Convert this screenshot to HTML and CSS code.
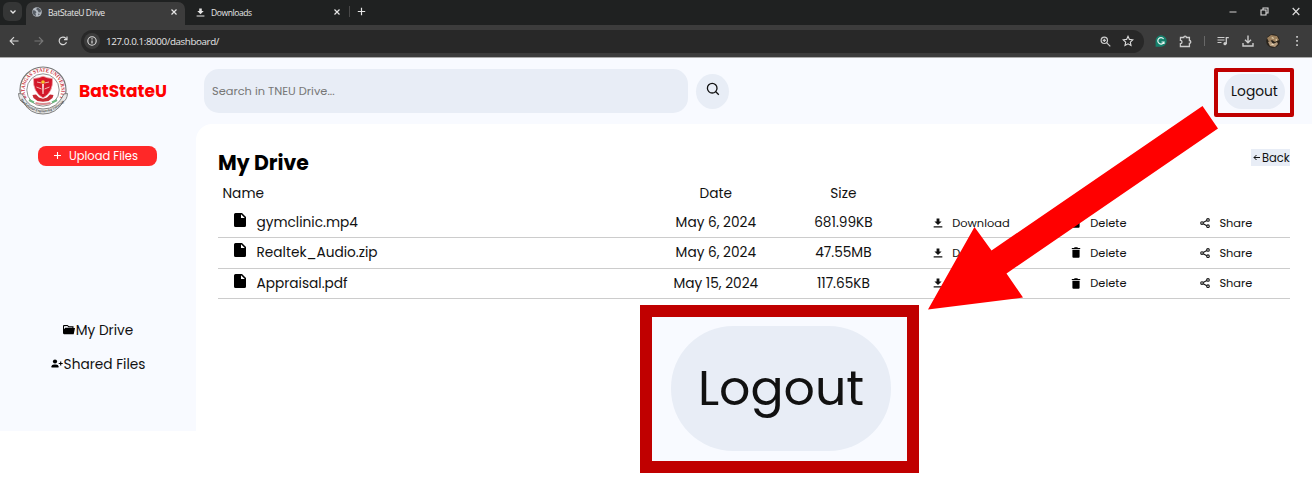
FILE: index.html
```html
<!DOCTYPE html>
<html lang="en">
<head>
<meta charset="utf-8">
<title>BatStateU Drive</title>
<link rel="stylesheet" href="styles.css">
</head>
<body>
<svg class="defs" aria-hidden="true">
  <symbol id="close" viewBox="0 0 10 10"><path d="M2.500 2.500l5 5M7.500 2.500l-5 5" fill="none" stroke="currentColor" stroke-width="1.200"/></symbol>
  <symbol id="download" viewBox="0 0 12 12"><path d="M4.300 .5h3.400v3.600H10.300L6 8.400 1.700 4.100h2.600zM.8 10h10.400v1.400H.8z" fill="currentColor"/></symbol>
  <symbol id="file" viewBox="0 0 12 14"><path fill-rule="evenodd" d="M1.500 0H8l4 4v8.500q0 1.500-1.500 1.500h-9Q0 14 0 12.500v-11Q0 0 1.500 0zM7 1.200V5h3.800z"/></symbol>
  <symbol id="trash" viewBox="0 0 10 11"><path d="M.8.9H3L3.700.2h2.600L7 .9h2.200v1.200H.8zM1.400 2.800h7.200v7q0 1-1 1H2.400q-1 0-1-1z"/></symbol>
  <symbol id="share" viewBox="0 0 10 10"><g fill="none" stroke="currentColor" stroke-width="1.100"><path d="M3.200 4.400l3.600-2M3.200 5.800l3.600 2"/><circle cx="2" cy="5.100" r="1.300"/><circle cx="8" cy="1.900" r="1.300"/><circle cx="8" cy="8.200" r="1.300"/></g></symbol>
</svg>

<header class="browser">
  <div class="tabs">
    <div class="tab-menu"><svg width="8" height="8" viewBox="0 0 8 8"><path d="M1.500 2.500L4 5l2.500-2.500" fill="none" stroke="#e6e6e6" stroke-width="1.300"/></svg></div>
    <div class="tab active">
      <svg width="10" height="10" viewBox="0 0 10 10"><circle cx="5" cy="5" r="4.800" fill="#b4bac2"/><path d="M1 3.200l2 .3 1.500 1.700-1 1 .6 2.800Q.8 8.500.6 4.800zM5 .8l-.8 1.600L6 3.800l.3 1.400 2 .4.800-1.700Q8.300 1 5 .8zM6 6.500l2 .4-1.500 1.700z" fill="#555b63"/></svg>
      <span class="tab-title">BatStateU Drive</span>
      <svg class="x" width="10" height="10"><use href="#close"/></svg>
    </div>
    <div class="tab idle">
      <svg width="9" height="9"><use href="#download"/></svg>
      <span class="tab-title wide">Downloads</span>
      <svg class="x" width="10" height="10"><use href="#close"/></svg>
    </div>
    <i class="tab-divider"></i>
    <svg class="new-tab" width="9" height="9" viewBox="0 0 9 9"><path d="M4.500.8v7.400M.8 4.500h7.400" stroke="#e6e6e6" stroke-width="1.200"/></svg>
    <div class="window-buttons">
      <svg width="8" height="9" viewBox="0 0 8 9"><path d="M.5 5h7" stroke="#aaa" stroke-width="1.300"/></svg>
      <svg width="9" height="9" viewBox="0 0 9 9"><path d="M1 3h5v5H1zM3 3V1h5v5H6" fill="none" stroke="#ddd" stroke-width="1.100"/></svg>
      <svg width="8" height="9" viewBox="0 0 8 9"><path d="M.7 1l6.600 7M7.300 1L.7 8" stroke="#ddd" stroke-width="1.100"/></svg>
    </div>
  </div>
  <div class="toolbar">
    <svg width="10" height="10" viewBox="0 0 10 10"><path d="M9.500 5H1.200M5 1.200L1.200 5 5 8.800" fill="none" stroke="#d8d8d8" stroke-width="1.200"/></svg>
    <svg class="forward" width="10" height="10" viewBox="0 0 10 10"><path d="M.5 5h8.300M5 1.200L8.800 5 5 8.800" fill="none" stroke="#777" stroke-width="1.200"/></svg>
    <svg class="reload" width="10" height="10" viewBox="0 0 10 10"><path d="M8.500 6.300A3.800 3.800 0 1 1 7.800 2.300L9 3.500M9 .6v3H6" fill="none" stroke="#d8d8d8" stroke-width="1.200"/></svg>
    <div class="address">
      <span class="info"><svg width="10" height="10" viewBox="0 0 10 10"><circle cx="5" cy="5" r="4.200" fill="none" stroke="#ddd" stroke-width="1.100"/><path d="M5 4.400v3M5 2.300v1.200" stroke="#ddd" stroke-width="1.200"/></svg></span>
      <span class="url">127.0.0.1:8000/dashboard/</span>
      <svg class="magnify" width="11" height="11" viewBox="0 0 11 11"><circle cx="4.300" cy="4.300" r="3.200" fill="none" stroke="#ccc" stroke-width="1.200"/><path d="M6.800 6.800l3.500 3.500M2.700 4.300h3.200M4.300 2.700v3.200" stroke="#ccc" stroke-width="1.200"/></svg>
      <svg class="star" width="12" height="12" viewBox="0 0 12 12"><path d="M6 1.300l1.400 3.100 3.400.4-2.500 2.300.7 3.400-3-1.700-3 1.700.7-3.400L1.200 4.800l3.400-.4z" fill="none" stroke="#ddd" stroke-width="1.100"/></svg>
    </div>
    <div class="extensions">
      <svg width="12" height="12" viewBox="0 0 12 12"><path d="M6 .3a5.700 5.700 0 1 1 0 11.400H.6V6A5.600 5.600 0 0 1 6 .3z" fill="#15806c"/><path d="M8.600 4A3.200 3.200 0 1 0 9 7H6.500M9 7v2" fill="none" stroke="#e8f4f1" stroke-width="1.200"/></svg>
      <svg width="13" height="13" viewBox="0 0 13 13"><path d="M1.500 2.500h3.300a1.300 1.300 0 0 1 2.600 0h3v3a1.400 1.400 0 0 1 0 2.800v3.200h-9V8.600a1.600 1.600 0 0 0 0-3.200z" fill="none" stroke="#ccc" stroke-width="1.300"/></svg>
      <i class="divider"></i>
      <svg width="12" height="10" viewBox="0 0 12 10"><path d="M.5 1.500h7M.5 4h7M.5 6.500h4" stroke="#ccc" stroke-width="1.200"/><path d="M9.300 8V1.600h2.500" fill="none" stroke="#ccc" stroke-width="1.300"/><circle cx="8" cy="7.700" r="1.600" fill="#ccc"/></svg>
      <svg width="12" height="12" viewBox="0 0 12 12"><path d="M6 .5v7M3 4.700l3 3 3-3M1 8v3h10V8" fill="none" stroke="#ccc" stroke-width="1.400"/></svg>
      <svg width="14" height="14" viewBox="0 0 14 14"><circle cx="7" cy="7" r="6.800" fill="#29221a"/><path d="M1 4l4-3 6 1 2 4-4 2-3-2-3 2z" fill="#9c805d"/><path d="M2 8l3-1 2 3 4-2 1 2-3 3-5-1z" fill="#b49a7c"/><path d="M5 4l2-1 1 2zM9 6l2-1v2zM5 11l2-2 1 2z" fill="#e8d8b8"/></svg>
      <svg class="more" width="4" height="12" viewBox="0 0 4 12"><path d="M1.200 1h1.700v1.700H1.200zM1.200 5.100h1.700v1.700H1.200zM1.200 9.200h1.700v1.700H1.200z" fill="#ccc"/></svg>
    </div>
  </div>
</header>

<div class="app">
  <aside class="sidebar">
    <div class="brand">
      <svg class="seal" width="52" height="50" viewBox="0 0 52 50">
        <defs>
          <path id="ring" d="M9.500 32A18.300 18.300 0 1 1 42.500 32"/>
          <path id="ribbon" d="M4 33Q26 57 49 32"/>
        </defs>
        <circle cx="26" cy="24" r="23" fill="#fff" stroke="#777" stroke-width="1.200"/>
        <circle cx="26" cy="24" r="16.200" fill="#fff" stroke="#777" stroke-width=".8"/>
        <text class="ring-text"><textPath href="#ring" textLength="74" lengthAdjust="spacingAndGlyphs">BATANGAS STATE UNIVERSITY</textPath></text>
        <path d="M16.500 12.500q5-.2 9.500-2.300Q30.500 12.300 35.500 12.500q1 14-9.500 19.500Q15.500 26 16.500 12.500z" fill="#d31729" stroke="#f0a9ad" stroke-width=".8"/>
        <path d="M20 16l4.500 1M32 16l-4.500 1M19.500 21l5 2M32.500 21l-5 2" stroke="#f3b6b0" stroke-width="1"/>
        <path d="M25 18h2l-.4 10h-1.200z" fill="#f8d3cf"/><circle cx="26" cy="16" r="1.800" fill="#f6c32c"/>
        <path d="M15.500 29l3.500-.5 3 3 4 1.200 4-1.200 3-3 3.500.5-1 3-4 3-5.500.8-5.500-.8-4-3z" fill="#c72b35"/>
        <path d="M12 34l5 2.500M40 34l-5 2.500" stroke="#6fb780" stroke-width="2"/>
        <path d="M18.500 37q7.500 2 15 0" stroke="#d98c90" stroke-width="2" fill="none"/>
        <path d="M1.500 27.500L5 28Q12 43 26 43T47 28l3.500-.5Q50 34 46 36 39 48 26 48T7 37Q2 35 1.500 27.500z" fill="#e8e8e8" stroke="#777" stroke-width=".9"/>
        <text class="ribbon-text" dy="1.500"><textPath href="#ribbon" textLength="49" lengthAdjust="spacingAndGlyphs">The National Engineering University</textPath></text>
      </svg>
      <span class="brand-name">BatStateU</span>
    </div>
    <button class="upload"><svg width="9" height="9" viewBox="0 0 9 9"><path d="M4.500 1v7M1 4.500h7" stroke="#fff" stroke-width="1.100"/></svg><span>Upload Files</span></button>
    <nav class="nav">
      <a class="nav-item"><svg width="12" height="10" viewBox="0 0 12 10"><path fill-rule="evenodd" d="M1 0h3.500L6 1.300h4.500V3H12l-1.300 6.200H1Q0 9 0 8V1q0-1 1-1zM1 1.200v3L2.200 2.800h7.200v-.6H5.500L4.200 1z"/></svg><span>My Drive</span></a>
      <a class="nav-item"><svg width="12" height="10" viewBox="0 0 12 10"><circle cx="4" cy="2.500" r="2.100"/><path d="M.5 8.500V7.300Q.5 5.400 3 5.400h2q2.500 0 2.500 1.900v1.200z"/><path d="M9.700 2.500v4M7.700 4.500h4" stroke="#000" stroke-width="1.100"/></svg><span>Shared Files</span></a>
    </nav>
  </aside>

  <div class="content">
    <div class="topbar">
      <div class="search">Search in TNEU Drive...</div>
      <button class="search-button"><svg width="14" height="14" viewBox="0 0 14 14"><circle cx="6.200" cy="6.200" r="4.800" fill="none" stroke="#111" stroke-width="1.300"/><path d="M9.500 9.500l3.300 3.300" stroke="#111" stroke-width="1.300"/></svg></button>
      <button class="logout">Logout</button>
    </div>
    <main class="drive">
      <div class="heading">
        <h1>My Drive</h1>
        <a class="back"><svg width="7" height="7" viewBox="0 0 7 7"><path d="M7 3.500H1M3.500 1L1 3.500 3.500 6" fill="none" stroke="#111"/></svg><span>Back</span></a>
      </div>
      <div class="files">
        <div class="row head"><span class="name">Name</span><span>Date</span><span>Size</span></div>
        <div class="row">
          <span class="name"><svg width="12" height="14"><use href="#file"/></svg><b>gymclinic.mp4</b></span>
          <span>May 6, 2024</span><span>681.99KB</span>
          <span class="action get"><svg width="10" height="10"><use href="#download"/></svg><b>Download</b></span>
          <span class="action del"><svg width="10" height="11"><use href="#trash"/></svg><b>Delete</b></span>
          <span class="action share"><svg width="10" height="10"><use href="#share"/></svg><b>Share</b></span>
        </div>
        <div class="row">
          <span class="name"><svg width="12" height="14"><use href="#file"/></svg><b>Realtek_Audio.zip</b></span>
          <span>May 6, 2024</span><span>47.55MB</span>
          <span class="action get"><svg width="10" height="10"><use href="#download"/></svg><b>Download</b></span>
          <span class="action del"><svg width="10" height="11"><use href="#trash"/></svg><b>Delete</b></span>
          <span class="action share"><svg width="10" height="10"><use href="#share"/></svg><b>Share</b></span>
        </div>
        <div class="row">
          <span class="name"><svg width="12" height="14"><use href="#file"/></svg><b>Appraisal.pdf</b></span>
          <span>May 15, 2024</span><span>117.65KB</span>
          <span class="action get"><svg width="10" height="10"><use href="#download"/></svg><b>Download</b></span>
          <span class="action del"><svg width="10" height="11"><use href="#trash"/></svg><b>Delete</b></span>
          <span class="action share"><svg width="10" height="10"><use href="#share"/></svg><b>Share</b></span>
        </div>
      </div>
    </main>
  </div>
</div>

<div class="highlight"></div>
<svg class="arrow" width="290" height="206" viewBox="0 0 290 206"><path d="M274.500 0L290 22.500 78.500 167.500 95 191.500 0 203.500 46.500 121 63.500 144.500z" fill="#f00"/></svg>
<div class="callout"><div class="callout-pill">Logout</div></div>
</body>
</html>
```
FILE: styles.css
```css
* { box-sizing: border-box; }
body { margin: 0; height: 484px; overflow: hidden; background: #fff; color: #111; font-family: Poppins, Inter, sans-serif; font-size: 13.5px; }
svg { display: block; flex: none; }
button { border: 0; margin: 0; padding: 0; font: inherit; color: inherit; }
b { font-weight: 400; }
.defs { display: none; }

/* Browser frame */
.browser { height: 58px; background: #3c3c3c; border-bottom: 1px solid #aaa; font-family: "Open Sans", "Noto Sans", sans-serif; color: #e6e6e6; }
.tabs { display: flex; height: 25px; background: #1f2121; padding-left: 3px; }
.tab-menu { display: grid; place-items: center; width: 19px; height: 19px; margin-top: 2px; border-radius: 6px; background: #353636; }
.tab { display: flex; align-items: center; height: 23px; margin-top: 2px; padding-bottom: 3px; font-size: 8.5px; }
.tab.active { width: 159px; margin-left: 4px; padding-left: 6px; background: #3c3c3c; border-radius: 7px 7px 0 0; }
.tab.idle { width: 164px; padding-left: 11px; }
.tab-divider { width: 1px; height: 11px; margin-top: 6px; background: #484848; }
.tab-title { margin-left: 6px; letter-spacing: -.4px; white-space: nowrap; }
.x { margin-left: auto; margin-right: 6px; }
.idle .x { margin-right: 7px; }
.new-tab { margin: 7px 0 0 7px; }
.window-buttons { display: flex; gap: 23px; margin: 7px 12px 0 auto; }
.toolbar { display: flex; align-items: center; height: 32px; padding: 0 13px 0 9px; }
.forward { margin-left: 15px; }
.reload { margin-left: 14px; }
.address { display: flex; align-items: center; width: 1063px; height: 23px; margin-left: 13px; padding: 0 10px 0 3px; border-radius: 12px; background: #282828; }
.info { display: grid; place-items: center; width: 16px; height: 16px; border-radius: 50%; background: #3c3c3c; }
.url { margin-left: 6px; font-size: 9.8px; letter-spacing: -.4px; }
.magnify { margin-left: auto; }
.star { margin-left: 11px; }
.extensions { display: flex; flex: 1; align-items: center; justify-content: space-between; margin-left: 11px; }
.divider { width: 1px; height: 10px; background: #686868; }
.more { margin-left: 3px; }

/* App shell */
.app { display: flex; height: 373px; background: #f8faff; }
.sidebar { display: flex; flex-direction: column; width: 196px; }
.brand { display: flex; align-items: center; height: 66px; padding-left: 17px; }
.brand-name { margin-left: 10px; color: #f00; font-size: 17px; font-weight: 700; }
.ring-text { fill: #c72b35; font: 700 5.5px "Liberation Serif", serif; }
.ribbon-text { fill: #333; font: italic 700 3.8px "Liberation Serif", serif; }
.upload { display: flex; align-items: center; gap: 7px; width: 119px; height: 20px; margin: 22px 0 0 38px; padding-left: 15px; border-radius: 8px; background: #ff2828; color: #fff; font-size: 11.5px; white-space: nowrap; }
.upload svg { margin-top: -2px; }
.nav { display: flex; flex-direction: column; align-items: center; gap: 10px; margin-top: 153px; }
.nav-item { display: flex; align-items: center; height: 24px; gap: 1px; font-size: 13.7px; white-space: nowrap; }
.nav-item svg { margin-top: -3px; }
.content { display: flex; flex: 1; flex-direction: column; }
.topbar { display: flex; flex: none; align-items: center; height: 66px; padding: 0 27px 0 8px; }
.search { width: 484px; height: 44px; padding-left: 8px; border-radius: 15px; background: #e8edf6; color: #777; font-size: 11.4px; line-height: 44px; }
.search-button { display: grid; place-items: center; width: 33px; height: 35px; margin-left: 8px; padding-bottom: 5px; border-radius: 50%; background: #e8edf6; }
.logout { width: 61px; height: 35px; padding-top: 2px; margin-left: auto; border-radius: 18px; background: #e8edf6; font-size: 13.8px; }
.drive { height: 360px; flex: none; padding: 26px 22px 0; border-radius: 16px 0 0; background: #fff; }
.heading { display: flex; justify-content: space-between; height: 28px; }
h1 { margin: 0; font-size: 20.4px; line-height: 26px; font-weight: 700; color: #000; }
.back { display: flex; align-items: center; gap: 2px; width: 39px; height: 17px; margin-top: -1px; padding: 2px 0 0 2px; background: #e8edf6; font-size: 11.5px; }
.back svg { margin-top: -2px; }
.row { display: grid; grid-template-columns: 434px repeat(5, 1fr); align-items: center; height: 30.3px; padding-top: 1px; border-bottom: 1px solid #ccc; text-align: center; font-size: 13.7px; white-space: nowrap; }
.row.head { height: 30px; padding-top: 2px; border: 0; }
.name { display: flex; align-items: center; padding-left: 16px; }
.name svg { margin: -6px 11px 0 -.5px; }
.head .name { padding-left: 4.5px; }
.action { display: flex; align-items: center; font-size: 11.4px; }
.action svg { margin: -1px 9px 0 0; }
.get { padding-left: 26px; }
.del { padding-left: 36.5px; }
.share { padding-left: 38px; }

/* Annotations laid over the page */
.highlight { position: absolute; left: 1214px; top: 68px; width: 80px; height: 49px; border: 4px solid #c00000; border-radius: 2px; }
.arrow { position: absolute; left: 928px; top: 106px; }
.callout { position: absolute; left: 640px; top: 305px; display: grid; place-items: center; width: 279px; height: 168px; border: 12px solid #c00000; background: #f8faff; }
.callout-pill { width: 220px; height: 125px; margin-top: -2px; margin-left: 3px; border-radius: 62px; background: #e8edf6; font-size: 49px; line-height: 124px; text-align: center; }
```
